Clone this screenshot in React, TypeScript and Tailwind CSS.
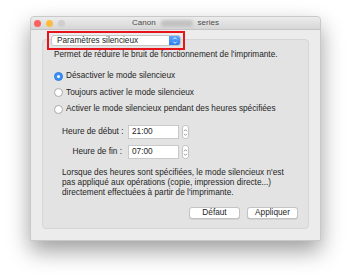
import React from 'react';

const font = { fontFamily: '"Liberation Sans", Arial, sans-serif' };

const Radio = ({ checked, label }: { checked?: boolean; label: string }) => (
  <div className="flex items-center h-[10px]">
    {checked ? (
      <span className="w-[9px] h-[9px] rounded-full bg-[#3a8ff6] border border-[#2f7fe6] flex items-center justify-center">
        <span className="w-[3px] h-[3px] rounded-full bg-white"></span>
      </span>
    ) : (
      <span className="w-[9px] h-[9px] rounded-full bg-white border border-[#a9a9a9]"></span>
    )}
    <span className="ml-[3px]">{label}</span>
  </div>
);

const Stepper = () => (
  <div className="ml-[3px] w-[7px] h-[14px] rounded-[3px] bg-white border border-[#c4c4c4] flex items-center justify-center">
    <svg width="5" height="9" viewBox="0 0 5 9">
      <path d="M1 3.2 L2.5 1.7 L4 3.2" fill="none" stroke="#7a7a7a" strokeWidth="0.8" />
      <path d="M1 5.8 L2.5 7.3 L4 5.8" fill="none" stroke="#7a7a7a" strokeWidth="0.8" />
    </svg>
  </div>
);

const TimeRow = ({ label, value }: { label: string; value: string }) => (
  <div className="flex items-center h-[14px] pl-[19px]">
    <span className="w-[60px] text-right whitespace-nowrap">{label}</span>
    <div className="ml-[6px] w-[51px] h-[14px] bg-white border border-[#c9c9c9] flex items-center pl-[3px]">
      {value}
    </div>
    <Stepper />
  </div>
);

const Button = ({ label }: { label: string }) => (
  <div className="w-[51px] h-[12px] bg-white border border-[#c3c3c3] rounded-[3px] flex items-center justify-center shadow-[0_0.5px_0.5px_rgba(0,0,0,0.15)]">
    {label}
  </div>
);

export default function App() {
  return (
    <div className="w-[351px] h-[278px] bg-white pt-[16px] pl-[30px] text-[8.25px] leading-[10px] text-[#1e1e1e]" style={font}>
      <div className="w-[291px] h-[225px] flex flex-col border border-[#c9c9c9] rounded-t-[4px] shadow-[0_10px_22px_rgba(0,0,0,0.38)] bg-[#ececec]">
        <div className="relative h-[13px] shrink-0 bg-gradient-to-b from-[#ececec] to-[#d6d6d6] border-b border-[#c4c4c4] rounded-t-[4px] flex items-center">
          <div className="flex items-center gap-[5px] pl-[3px]">
            <span className="w-[7px] h-[7px] rounded-full bg-[#fc605c]"></span>
            <span className="w-[7px] h-[7px] rounded-full bg-[#fdbc40]"></span>
            <span className="w-[7px] h-[7px] rounded-full bg-[#cfcfcf]"></span>
          </div>
          <div className="absolute inset-0 flex items-center justify-center text-[#4a4a4a] text-[8px]">
            <span>Canon</span>
            <span className="mx-[5px] w-[32px] h-[7px] rounded-[3px] bg-[#c2c2c2] blur-[1.5px]"></span>
            <span>series</span>
          </div>
        </div>
        <div className="flex-1 flex flex-col pt-[1px] px-[11px] pb-[11px]">
          <div className="relative z-10 ml-[5px] w-[138px] h-[19px] border-2 border-[#e8141b] p-[2px]">
            <div className="h-full bg-white border border-[#c6c6c6] rounded-[3px] flex items-center">
              <span className="flex-1 pl-[5px]">Paramètres silencieux</span>
              <div className="w-[11px] h-full rounded-r-[2px] bg-gradient-to-b from-[#5ea5fb] to-[#2b7ef2] flex items-center justify-center">
                <svg width="6" height="9" viewBox="0 0 6 9">
                  <path d="M1.3 3.3 L3 1.6 L4.7 3.3" fill="none" stroke="white" strokeWidth="0.9" />
                  <path d="M1.3 5.7 L3 7.4 L4.7 5.7" fill="none" stroke="white" strokeWidth="0.9" />
                </svg>
              </div>
            </div>
          </div>
          <div className="-mt-[11px] flex-1 bg-[#e3e3e3] border border-[#d6d6d6] rounded-[4px] pt-[10px] flex flex-col">
            <div className="pl-[11px]">Permet de réduire le bruit de fonctionnement de l'imprimante.</div>
            <div className="pl-[11px] mt-[11px] flex flex-col gap-[6.5px]">
              <Radio checked label="Désactiver le mode silencieux" />
              <Radio label="Toujours activer le mode silencieux" />
              <Radio label="Activer le mode silencieux pendant des heures spécifiées" />
            </div>
            <div className="mt-[11px] flex flex-col gap-[6px]">
              <TimeRow label="Heure de début :" value="21:00" />
              <TimeRow label="Heure de fin :" value="07:00" />
            </div>
            <div className="mt-[9px] pl-[19px] whitespace-nowrap">
              <div>Lorsque des heures sont spécifiées, le mode silencieux n'est</div>
              <div>pas appliqué aux opérations (copie, impression directe...)</div>
              <div>directement effectuées à partir de l'imprimante.</div>
            </div>
            <div className="mt-auto mb-[9px] mr-[10px] flex justify-end gap-[7px]">
              <Button label="Défaut" />
              <Button label="Appliquer" />
            </div>
          </div>
        </div>
      </div>
    </div>
  );
}
